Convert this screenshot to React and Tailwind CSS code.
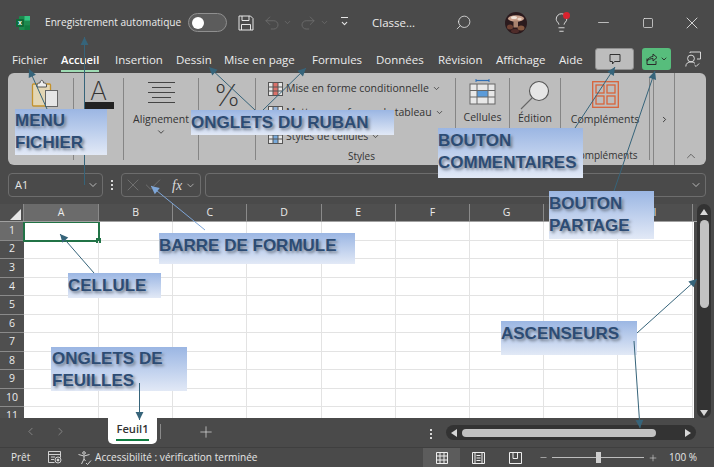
import { Undo2, Redo2, Search, Lightbulb, Minus, Square, X, ChevronDown, ChevronRight, ChevronLeft, ChevronUp, Plus, Check } from "lucide-react";

const tabs = [
  ["Fichier", "w-[49px]"],
  ["Accueil", "w-[54px]"],
  ["Insertion", "w-[61px]"],
  ["Dessin", "w-[48px]"],
  ["Mise en page", "w-[88px]"],
  ["Formules", "w-[64px]"],
  ["Données", "w-[62px]"],
  ["Révision", "w-[58px]"],
  ["Affichage", "w-[63px]"],
  ["Aide", "w-[36px]"],
];

const columns = ["B", "C", "D", "E", "F", "G", "H", "I"];
const rows = [1, 2, 3, 4, 5, 6, 7, 8, 9, 10, 11];

const labelClass =
  "absolute z-20 bg-gradient-to-b from-[#9bb6e3] to-[#e2e9f6] text-[17px] leading-[22px] font-bold text-[#2d4c74] [text-shadow:2px_2px_3px_#717b8a] font-['Liberation_Sans',sans-serif]";

function Arrow({ x1, y1, x2, y2, color = "#36647a" }) {
  // petite pointe de flèche au bout de la ligne
  const a = Math.atan2(y2 - y1, x2 - x1);
  const p1 = `${x2 - 9 * Math.cos(a - 0.45)},${y2 - 9 * Math.sin(a - 0.45)}`;
  const p2 = `${x2 - 9 * Math.cos(a + 0.45)},${y2 - 9 * Math.sin(a + 0.45)}`;
  return (
    <g>
      <line x1={x1} y1={y1} x2={x2} y2={y2} stroke={color} strokeWidth="1" />
      <polygon points={`${x2},${y2} ${p1} ${p2}`} fill={color} />
    </g>
  );
}

function ExcelLogo() {
  return (
    <svg width="16" height="16" viewBox="0 0 16 16">
      <rect x="4" y="1" width="11" height="14" rx="1" fill="#1d8a4e" />
      <rect x="9.5" y="1" width="5.5" height="4.6" fill="#33c481" />
      <rect x="9.5" y="10.4" width="5.5" height="4.6" fill="#107c41" />
      <rect x="1" y="4" width="8" height="8" rx="1" fill="#0f6b38" />
      <text x="5" y="10.4" textAnchor="middle" fontSize="7" fontWeight="700" fill="#fff" fontFamily="Liberation Sans">x</text>
    </svg>
  );
}

function SaveIcon() {
  return (
    <svg width="16" height="16" viewBox="0 0 16 16" fill="none" stroke="#e6e6e6" strokeWidth="1">
      <path d="M1 1h11.5L15 3.5V15H1z" />
      <path d="M4 1v4.5h7V1M3.5 15V9.5h9V15" />
    </svg>
  );
}

function Avatar() {
  return (
    <svg className="ml-[33px]" width="22" height="22" viewBox="0 0 22 22">
      <defs>
        <clipPath id="avatar-clip"><circle cx="11" cy="11" r="11" /></clipPath>
      </defs>
      <g clipPath="url(#avatar-clip)">
        <rect width="22" height="22" fill="#2b1a1d" />
        <ellipse cx="11" cy="6.5" rx="8" ry="3.2" fill="#c9a08c" />
        <ellipse cx="9" cy="5.5" rx="3" ry="1.6" fill="#f0e2d8" />
        <ellipse cx="14.5" cy="7" rx="2.2" ry="1.2" fill="#e8d2c4" />
        <rect x="8.5" y="8.5" width="4.5" height="7" fill="#a9836f" />
        <ellipse cx="5" cy="15" rx="3" ry="2.5" fill="#6e4032" />
        <ellipse cx="16" cy="16" rx="3.5" ry="2.5" fill="#84573f" />
        <ellipse cx="10" cy="19" rx="4" ry="2" fill="#4f2c2a" />
      </g>
    </svg>
  );
}

function PasteIcon() {
  return (
    <svg width="28" height="30" viewBox="0 0 28 30" fill="none">
      <rect x="1.5" y="5" width="18" height="22" rx="1" fill="#e3d6b4" stroke="#c4922c" strokeWidth="1.3" />
      <path d="M6 6c0-2 2-2 3-2 0-3.5 3.5-3.5 3.5 0 1 0 3 0 3 2v2H6z" fill="#ededed" stroke="#555" />
      <rect x="14.5" y="11.5" width="12" height="16" fill="#e6e6e6" stroke="#666" />
    </svg>
  );
}

function TableMiniIcon({ accent }) {
  return (
    <svg width="15" height="14" viewBox="0 0 15 14" fill="none">
      <rect x="0.5" y="0.5" width="14" height="13" fill="#e6e6e6" stroke="#555" />
      <rect x="5" y="1" width="5" height="12" fill={accent} opacity="0.8" />
      <path d="M5 0.5v13M10 0.5v13M0.5 5h14M0.5 9h14" stroke="#555" />
    </svg>
  );
}

function CellsIcon() {
  return (
    <svg className="shrink-0" width="27" height="26" viewBox="0 0 27 26" fill="none">
      <path d="M7 1.5h13" stroke="#2f6fb5" strokeWidth="1.2" />
      <path d="M7 0v3M20 0v3" stroke="#2f6fb5" />
      <rect x="1" y="5" width="25" height="20" fill="#e8e8e8" stroke="#666" />
      <rect x="8" y="11.5" width="11" height="6.5" fill="#5b9bd9" />
      <path d="M8 5v20M19 5v20M1 11.5h25M1 18h25" stroke="#666" />
    </svg>
  );
}

function MagnifierIcon() {
  return (
    <svg className="shrink-0" width="30" height="30" viewBox="0 0 30 30" fill="none">
      <circle cx="19" cy="11" r="9.5" fill="#e6e6e6" stroke="#555" strokeWidth="1.1" />
      <path d="M12 18 1 29" stroke="#666" strokeWidth="1.1" />
    </svg>
  );
}

function AddinsIcon() {
  return (
    <svg className="shrink-0" width="27" height="27" viewBox="0 0 27 27" fill="none" stroke="#d9633a" strokeWidth="1.3">
      <rect x="0.7" y="0.7" width="25.6" height="25.6" />
      <rect x="4" y="4" width="8" height="8" />
      <rect x="15" y="4" width="8" height="8" />
      <rect x="4" y="15" width="8" height="8" />
      <rect x="15" y="15" width="8" height="8" />
    </svg>
  );
}

function Toggle() {
  return (
    <div className="w-[39px] h-[19px] rounded-full border border-[#8f8f8f] bg-[#5c5c5c] flex items-center pl-[3px]">
      <div className="w-[12px] h-[12px] rounded-full bg-white" />
    </div>
  );
}

function TitleBar() {
  return (
    <div className="h-[45px] shrink-0 flex items-center text-[#ececec]">
      <div className="ml-[15px] w-[30px]"><ExcelLogo /></div>
      <span className="w-[143px] text-[10.15px] whitespace-nowrap">Enregistrement automatique</span>
      <Toggle />
      <div className="ml-[11px]"><SaveIcon /></div>
      <Undo2 className="ml-[9px] text-[#6f6f6f]" size={18} strokeWidth={1.1} />
      <ChevronDown className="ml-[2px] text-[#6f6f6f]" size={9} />
      <Redo2 className="ml-[7px] text-[#6f6f6f]" size={18} strokeWidth={1.1} />
      <ChevronDown className="ml-[3px] text-[#6f6f6f]" size={9} />
      <div className="ml-[11px] flex flex-col items-center gap-[1px]">
        <div className="w-[7px] h-px bg-[#e6e6e6]" />
        <ChevronDown className="text-[#e6e6e6]" size={9} strokeWidth={3} />
      </div>
      <span className="ml-[23px] text-[11.5px] w-[83px]">Classe...</span>
      <Search className="-scale-x-100" size={17} strokeWidth={1.1} />
      <Avatar />
      <div className="relative ml-[24px]">
        <Lightbulb size={21} strokeWidth={1} />
        <div className="absolute top-0 right-[2px] w-[7px] h-[7px] rounded-full bg-[#d8232f]" />
      </div>
      <Minus className="ml-[23px]" size={17} strokeWidth={1} />
      <Square className="ml-[29.5px]" size={12} strokeWidth={1.4} />
      <X className="ml-[28px]" size={20} strokeWidth={1} />
    </div>
  );
}

function TabRow() {
  return (
    <div className="h-[28px] shrink-0 flex items-center pl-[12px] text-[#ececec] text-[11.5px]">
      {tabs.map(([name, width]) => (
        <div key={name} className={`${width} h-full flex items-center pt-[2px] whitespace-nowrap relative`}>
          {name === "Accueil" ? (
            <span className="relative font-semibold text-[11.2px] text-white">
              {name}
              <span className="absolute left-0 right-0 -bottom-[4px] h-[2px] bg-[#9fdcb4]" />
            </span>
          ) : (
            name
          )}
        </div>
      ))}
      <div className="w-[39px] h-[22px] rounded-[3px] bg-[#bdbdbd] border border-[#8e8e8e] flex items-center justify-center">
        <svg width="12" height="12" viewBox="0 0 12 12" fill="none" stroke="#333">
          <path d="M1 1.5h10v7H5.5L3.5 11V8.5H1z" />
        </svg>
      </div>
      <div className="ml-[8px] w-[29px] h-[22px] rounded-[3px] bg-[#57bd7c] flex items-center justify-center gap-[2px]">
        <svg width="12" height="12" viewBox="0 0 12 12" fill="none" stroke="#2b2b2b">
          <path d="M1 5.5v6h9V8M1 8c1-3 4-4.5 6-4.5V1l4 3.5L7 8V5.5C4.5 5.5 2.5 6.5 1 8z" />
        </svg>
        <ChevronDown className="text-[#222]" size={8} strokeWidth={2.5} />
      </div>
      <svg className="ml-[14px]" width="16" height="16" viewBox="0 0 16 16" fill="none" stroke="#e6e6e6" strokeWidth="0.9">
        <circle cx="6" cy="7.5" r="3.4" />
        <path d="M0.8 15.5c0-3 2.2-4.6 5.2-4.6 1.6 0 3 .5 4 1.4M5 2V1h10.5v7H12M9.5 14l1.6 1.5 3-3" />
      </svg>
    </div>
  );
}

function Ribbon() {
  return (
    <div className="mx-[8px] h-[92px] shrink-0 rounded-[6px] bg-[#bdbdbd] flex text-[#333] text-[10.5px]">
      <div className="w-[66px] my-[5px] border-r border-[#858585] flex justify-center pl-[8px] pt-[1px]">
        <PasteIcon />
      </div>
      <div className="w-[50px] my-[5px] border-r border-[#858585] flex flex-col items-center">
        <span className="mt-[2px] text-[26px] leading-[22px] font-extralight text-[#333] font-['Inter',sans-serif]">A</span>
        <div className="w-[30px] h-[7px] bg-[#222]" />
      </div>
      <div className="w-[75px] my-[5px] border-r border-[#858585] flex flex-col items-center">
        <div className="mt-[4px] w-[27px] flex flex-col gap-[4px] items-center">
          <div className="w-[27px] h-px bg-[#444]" />
          <div className="w-[19px] h-px bg-[#444]" />
          <div className="w-[27px] h-px bg-[#444]" />
          <div className="w-[19px] h-px bg-[#444]" />
          <div className="w-[27px] h-px bg-[#444]" />
        </div>
        <span className="mt-[9px] leading-[14px] whitespace-nowrap">Alignement</span>
        <ChevronDown className="mt-[1px]" size={10} />
      </div>
      <div className="w-[57px] my-[5px] border-r border-[#858585] flex justify-center">
        <span className="mt-[2px] text-[30px] leading-[30px] font-extralight text-[#333] font-['Inter',sans-serif]">%</span>
      </div>
      <div className="w-[200px] my-[5px] border-r border-[#858585] flex flex-col pl-[12px]">
        <div className="mt-[1px] h-[19px] shrink-0 flex items-center gap-[3px] whitespace-nowrap">
          <TableMiniIcon accent="#d8534a" />
          Mise en forme conditionnelle
          <ChevronDown size={9} />
        </div>
        <div className="mt-[5px] h-[19px] shrink-0 flex items-center gap-[3px] whitespace-nowrap">
          <TableMiniIcon accent="#7da7d8" />
          Mettre sous forme de tableau
          <ChevronDown size={9} />
        </div>
        <div className="mt-[5px] h-[19px] shrink-0 flex items-center gap-[3px] whitespace-nowrap">
          <TableMiniIcon accent="#5b9bd9" />
          Styles de cellules
          <ChevronDown size={9} />
        </div>
        <div className="mt-[3px] shrink-0 text-center text-[10px] leading-[14px]">Styles</div>
      </div>
      <div className="w-[54px] my-[5px] border-r border-[#858585] flex flex-col items-center pt-[1px]">
        <CellsIcon />
        <span className="mt-[5px] leading-[14px]">Cellules</span>
      </div>
      <div className="w-[51px] my-[5px] border-r border-[#858585] flex flex-col items-center pt-[2px]">
        <MagnifierIcon />
        <span className="mt-[1px] leading-[14px]">Édition</span>
      </div>
      <div className="w-[89px] my-[5px] border-r border-[#858585] flex flex-col items-center pt-[3px]">
        <AddinsIcon />
        <span className="mt-[4px] shrink-0 leading-[14px]">Compléments</span>
        <span className="mt-[22px] shrink-0 text-[10px] leading-[14px]">Compléments</span>
      </div>
      <div className="w-[4px] border-r border-[#858585]" />
      <div className="w-[21px] border-r border-[#858585] flex items-center justify-center">
        <ChevronRight size={9} strokeWidth={2.5} />
      </div>
      <div className="flex-1 flex items-end justify-center pb-[2px]">
        <ChevronUp size={14} strokeWidth={1.1} />
      </div>
    </div>
  );
}

function FormulaBar() {
  return (
    <div className="mt-[8px] h-[24px] shrink-0 px-[8px] flex items-center text-[#e6e6e6]">
      <div className="w-[95px] h-full rounded-[4px] border border-[#6d6d6d] flex items-center justify-between pl-[6px] pr-[3px] text-[11px]">
        A1
        <ChevronDown size={12} strokeWidth={1.4} />
      </div>
      <div className="w-[18px] flex flex-col items-center gap-[2px]">
        <div className="w-[2px] h-[2px] bg-[#d8d8d8]" />
        <div className="w-[2px] h-[2px] bg-[#d8d8d8]" />
        <div className="w-[2px] h-[2px] bg-[#d8d8d8]" />
      </div>
      <div className="w-[80px] h-full rounded-[4px] border border-[#6d6d6d] flex items-center pl-[1px]">
        <X className="text-[#7c7c7c]" size={20} strokeWidth={0.9} />
        <Check className="text-[#7c7c7c]" size={20} strokeWidth={0.9} />
        <span className="ml-[9px] text-[14px] italic font-['Liberation_Serif',serif] text-[#dcdcdc]">fx</span>
        <ChevronDown className="ml-[3px]" size={11} strokeWidth={1.3} />
      </div>
      <div className="ml-[4px] flex-1 h-full rounded-[4px] border border-[#6d6d6d] flex items-center justify-end pr-[3px]">
        <ChevronDown size={12} strokeWidth={1.4} />
      </div>
    </div>
  );
}

function Sheet() {
  return (
    <div className="mt-[7px] h-[214px] shrink-0 flex overflow-hidden">
      <div className="w-[697px] flex flex-col shrink-0">
        <div className="h-[18px] shrink-0 flex text-[#ececec] text-[10.5px] bg-[#4f4f4f] border-b border-[#a0a0a0]">
          <div className="w-[24px] flex items-end justify-end pr-[2px] pb-[1px] border-r border-[#8a8a8a]">
            <div className="w-0 h-0 border-l-[11px] border-l-transparent border-b-[11px] border-b-[#e6e6e6]" />
          </div>
          <div className="w-[75px] bg-[#6b6b6b] border-r border-[#8a8a8a] flex items-center justify-center">A</div>
          {columns.map((c) => (
            <div key={c} className="w-[74.2px] border-r border-[#8a8a8a] flex items-center justify-center">{c}</div>
          ))}
        </div>
        <div className="flex-1 overflow-hidden">
          {rows.map((r) => (
            <div key={r} className="h-[18.55px] flex">
              <div className={`w-[24px] shrink-0 flex items-center justify-center text-[10.5px] text-[#ececec] border-b border-[#8a8a8a] ${r === 1 ? "bg-[#6b6b6b]" : "bg-[#4f4f4f]"}`}>{r}</div>
              <div className="w-[670px] flex bg-white">
                <div className={`w-[75px] border-b border-r border-[#e3e3e3] relative ${r === 1 ? "outline-2 outline-[#217346] -outline-offset-1" : ""}`}>
                  {r === 1 && <div className="absolute right-[-3px] bottom-[-3px] w-[5px] h-[5px] bg-[#217346]" />}
                </div>
                {columns.map((c) => (
                  <div key={c} className="w-[74.2px] border-b border-r border-[#e3e3e3]" />
                ))}
              </div>
            </div>
          ))}
        </div>
      </div>
      <div className="w-[14px] h-[214px] rounded-full bg-[#333] flex flex-col items-center pt-[5px]">
        <div className="w-0 h-0 border-l-[4px] border-r-[4px] border-b-[6px] border-l-transparent border-r-transparent border-b-[#d8d8d8]" />
        <div className="mt-[5px] w-[9px] h-[88px] rounded-full bg-[#c2c2c2]" />
        <div className="mt-auto mb-[2px] w-0 h-0 border-l-[4px] border-r-[4px] border-t-[6px] border-l-transparent border-r-transparent border-t-[#d8d8d8]" />
      </div>
    </div>
  );
}

function SheetTabs() {
  return (
    <div className="h-[29px] shrink-0 flex items-start text-[#e6e6e6]">
      <ChevronLeft className="ml-[24px] mt-[7px] text-[#9a9a9a]" size={13} strokeWidth={1.3} />
      <ChevronRight className="ml-[17px] mt-[7px] text-[#9a9a9a]" size={13} strokeWidth={1.3} />
      <div className="ml-[41px] w-[49px] h-[26px] rounded-b-[5px] bg-white text-[#333] text-[11.2px] font-semibold flex flex-col items-center pt-[3px]">
        <span className="leading-[16px]">Feuil1</span>
        <div className="mt-[2px] w-[33px] h-[2px] bg-[#107c41]" />
      </div>
      <div className="ml-[3px] mt-[6px] w-px h-[15px] bg-[#8a8a8a]" />
      <Plus className="ml-[35.5px] mt-[5px]" size={18} strokeWidth={0.9} />
      <div className="ml-[215.5px] mt-[11px] flex flex-col gap-[2px]">
        <div className="w-[2px] h-[2px] bg-[#d8d8d8]" />
        <div className="w-[2px] h-[2px] bg-[#d8d8d8]" />
        <div className="w-[2px] h-[2px] bg-[#d8d8d8]" />
      </div>
      <div className="ml-[14px] mt-[7px] w-[250px] h-[15px] rounded-full bg-[#333] flex items-center pl-[5px] pr-[5px]">
        <div className="w-0 h-0 border-t-[4px] border-b-[4px] border-r-[6px] border-t-transparent border-b-transparent border-r-[#d8d8d8]" />
        <div className="ml-[5px] w-[194px] h-[8px] rounded-full bg-[#c2c2c2]" />
        <div className="ml-auto w-0 h-0 border-t-[4px] border-b-[4px] border-l-[6px] border-t-transparent border-b-transparent border-l-[#d8d8d8]" />
      </div>
    </div>
  );
}

function StatusBar() {
  return (
    <div className="h-[20px] shrink-0 border-t border-[#3f3f3f] flex items-center text-[#e6e6e6] text-[10px]">
      <span className="ml-[11px] w-[37px]">Prêt</span>
      <svg width="14" height="13" viewBox="0 0 14 13" fill="none" stroke="#e0e0e0" strokeWidth="0.9">
        <path d="M0.5 0.5h12v6M0.5 0.5v11h6M0.5 3.5h12M3 6h4M3 8.5h3" />
        <circle cx="10" cy="9" r="3" />
        <circle cx="10" cy="9" r="1" fill="#e0e0e0" />
      </svg>
      <svg className="ml-[16px]" width="14" height="14" viewBox="0 0 14 14" fill="none" stroke="#e0e0e0" strokeWidth="0.9">
        <circle cx="6" cy="2" r="1.3" />
        <path d="M0.5 3.5 6 5l5.5-1.5M6 5v3L3.5 13M6 8l1.5 2M8 12l1.5 1.5L13 9.5" />
      </svg>
      <span className="ml-[3px] w-[165px] text-[10.1px] whitespace-nowrap">Accessibilité : vérification terminée</span>
      <div className="ml-[163px] w-[37px] h-full bg-[#5c5c5c] flex items-center justify-center">
        <svg width="12" height="12" viewBox="0 0 12 12" fill="none" stroke="#eee">
          <path d="M0.5 0.5h11v11h-11zM4 0.5v11M8 0.5v11M0.5 4h11M0.5 8h11" />
        </svg>
      </div>
      <svg className="ml-[12px]" width="13" height="12" viewBox="0 0 13 12" fill="none" stroke="#eee">
        <path d="M0.5 0.5h12v11h-12zM3 0.5v11M10 0.5v11M4.5 3.5h4M4.5 6h4M4.5 8.5h4" />
      </svg>
      <svg className="ml-[24px]" width="13" height="12" viewBox="0 0 13 12" fill="none" stroke="#eee">
        <path d="M0.5 0.5h12v11h-12zM4 0.5v6h4.5v-6" />
      </svg>
      <Minus className="ml-[17px]" size={9} strokeWidth={1.5} />
      <div className="ml-[4px] w-[92px] h-px bg-[#bdbdbd] relative">
        <div className="absolute left-[44px] -top-[5px] w-[5px] h-[11px] bg-[#cfcfcf]" />
      </div>
      <Plus className="ml-[4px]" size={10} strokeWidth={1.3} />
      <span className="ml-[11px] whitespace-nowrap">100 %</span>
    </div>
  );
}

export default function App() {
  return (
    <div className="relative w-[714px] h-[467px] overflow-hidden bg-[#4a4a4a] flex flex-col font-['Open_Sans',sans-serif]">
      <TitleBar />
      <TabRow />
      <Ribbon />
      <FormulaBar />
      <Sheet />
      <SheetTabs />
      <StatusBar />

      {/* annotations posées par-dessus la capture */}
      <div className={`${labelClass} left-[15px] top-[109px] w-[92px] h-[46px] pt-px`}>MENU FICHIER</div>
      <div className={`${labelClass} left-[191px] top-[110px] w-[203px] h-[25px] pt-[2px]`}>ONGLETS DU RUBAN</div>
      <div className={`${labelClass} left-[438px] top-[128px] w-[145px] h-[50px] pt-[2px]`}>BOUTON COMMENTAIRES</div>
      <div className={`${labelClass} left-[549px] top-[191px] w-[105px] h-[48px] pt-[2px]`}>BOUTON PARTAGE</div>
      <div className={`${labelClass} left-[159px] top-[233px] w-[196px] h-[31px] pt-[2px]`}>BARRE DE FORMULE</div>
      <div className={`${labelClass} left-[68px] top-[273px] w-[93px] h-[25px] pt-[2px]`}>CELLULE</div>
      <div className={`${labelClass} left-[51px] top-[347px] w-[136px] h-[44px] pl-px pt-px`}>ONGLETS DE FEUILLES</div>
      <div className={`${labelClass} left-[501px] top-[321px] w-[136px] h-[34px] pt-[2px]`}>ASCENSEURS</div>

      <svg className="absolute inset-0 z-30 pointer-events-none" width="714" height="467">
        <Arrow x1={47} y1={109} x2={29} y2={69} />
        <Arrow x1={84.5} y1={109} x2={84.5} y2={37} />
        <line x1={84.5} y1={155} x2={84.5} y2={185} stroke="#36647a" />
        <Arrow x1={255} y1={110} x2={209} y2={67} />
        <Arrow x1={263} y1={110} x2={306} y2={68} />
        <Arrow x1={575} y1={128} x2={615} y2={67} />
        <Arrow x1={614} y1={191} x2={655} y2={71} />
        <Arrow x1={205} y1={230} x2={151} y2={186} color="#7ea6d8" />
        <Arrow x1={94} y1={273} x2={60} y2={234} />
        <Arrow x1={139.5} y1={383} x2={139.5} y2={420} />
        <Arrow x1={637} y1={333} x2={697} y2={279} />
        <Arrow x1={634} y1={341} x2={640} y2={428} />
      </svg>
    </div>
  );
}
